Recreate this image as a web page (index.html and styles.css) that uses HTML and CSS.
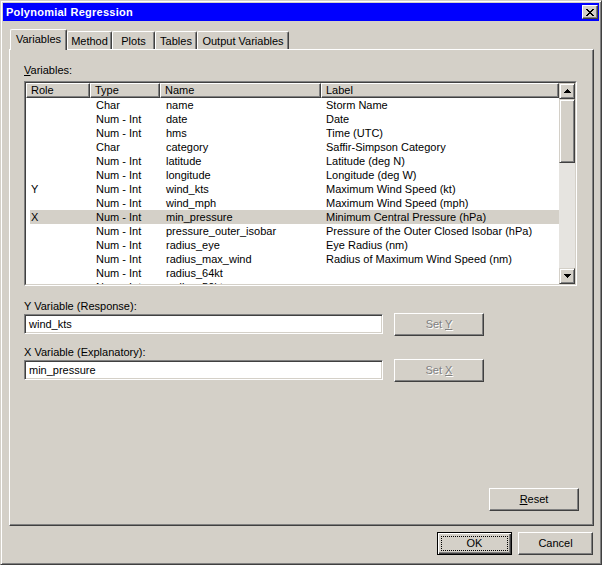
FILE: index.html
```html
<!DOCTYPE html>
<html>
<head>
<meta charset="utf-8">
<title>Polynomial Regression</title>
<link rel="stylesheet" href="styles.css">
</head>
<body>
<div class="window">
  <div class="titlebar">
    <span class="title">Polynomial Regression</span>
    <span class="close">
      <svg width="8" height="7" viewBox="0 0 8 7" shape-rendering="crispEdges"><path d="M0 0h2v1H0zM6 0h2v1H6zM1 1h2v1H1zM5 1h2v1H5zM2 2h4v1H2zM3 3h2v1H3zM2 4h4v1H2zM1 5h2v1H1zM5 5h2v1H5zM0 6h2v1H0zM6 6h2v1H6z" fill="#000"/></svg>
    </span>
  </div>

  <div class="tabs">
    <div class="tab tab-active tab-variables">Variables</div>
    <div class="tab tab-method">Method</div>
    <div class="tab tab-plots">Plots</div>
    <div class="tab tab-tables">Tables</div>
    <div class="tab tab-output">Output Variables</div>
  </div>

  <div class="panel">
    <div class="label"><u>V</u>ariables:</div>
    <div class="listbox">
      <div class="listinner">
        <div class="listmain">
          <div class="header">
            <div class="hcell hc-role">Role</div>
            <div class="hcell hc-type">Type</div>
            <div class="hcell hc-name">Name</div>
            <div class="hcell hc-label">Label</div>
          </div>
          <div class="rows">
            <div class="row"><span class="c-role"></span><span class="c-type">Char</span><span class="c-name">name</span><span class="c-label">Storm Name</span></div>
            <div class="row"><span class="c-role"></span><span class="c-type">Num - Int</span><span class="c-name">date</span><span class="c-label">Date</span></div>
            <div class="row"><span class="c-role"></span><span class="c-type">Num - Int</span><span class="c-name">hms</span><span class="c-label">Time (UTC)</span></div>
            <div class="row"><span class="c-role"></span><span class="c-type">Char</span><span class="c-name">category</span><span class="c-label">Saffir-Simpson Category</span></div>
            <div class="row"><span class="c-role"></span><span class="c-type">Num - Int</span><span class="c-name">latitude</span><span class="c-label">Latitude (deg N)</span></div>
            <div class="row"><span class="c-role"></span><span class="c-type">Num - Int</span><span class="c-name">longitude</span><span class="c-label">Longitude (deg W)</span></div>
            <div class="row"><span class="c-role">Y</span><span class="c-type">Num - Int</span><span class="c-name">wind_kts</span><span class="c-label">Maximum Wind Speed (kt)</span></div>
            <div class="row"><span class="c-role"></span><span class="c-type">Num - Int</span><span class="c-name">wind_mph</span><span class="c-label">Maximum Wind Speed (mph)</span></div>
            <div class="row row-selected"><span class="c-role">X</span><span class="c-type">Num - Int</span><span class="c-name">min_pressure</span><span class="c-label">Minimum Central Pressure (hPa)</span></div>
            <div class="row"><span class="c-role"></span><span class="c-type">Num - Int</span><span class="c-name">pressure_outer_isobar</span><span class="c-label">Pressure of the Outer Closed Isobar (hPa)</span></div>
            <div class="row"><span class="c-role"></span><span class="c-type">Num - Int</span><span class="c-name">radius_eye</span><span class="c-label">Eye Radius (nm)</span></div>
            <div class="row"><span class="c-role"></span><span class="c-type">Num - Int</span><span class="c-name">radius_max_wind</span><span class="c-label">Radius of Maximum Wind Speed (nm)</span></div>
            <div class="row"><span class="c-role"></span><span class="c-type">Num - Int</span><span class="c-name">radius_64kt</span><span class="c-label"></span></div>
            <div class="row"><span class="c-role"></span><span class="c-type">Num - Int</span><span class="c-name">radius_50kt</span><span class="c-label"></span></div>
          </div>
        </div>
        <div class="scrollbar">
          <div class="sb-btn">
            <svg width="7" height="4" viewBox="0 0 7 4" shape-rendering="crispEdges"><path d="M3 0h1v1H3zM2 1h3v1H2zM1 2h5v1H1zM0 3h7v1H0z" fill="#000"/></svg>
          </div>
          <div class="sb-thumb"></div>
          <div class="sb-track"></div>
          <div class="sb-btn">
            <svg width="7" height="4" viewBox="0 0 7 4" shape-rendering="crispEdges"><path d="M0 0h7v1H0zM1 1h5v1H1zM2 2h3v1H2zM3 3h1v1H3z" fill="#000"/></svg>
          </div>
        </div>
      </div>
    </div>

    <div class="label label-y">Y Variable (Response):</div>
    <div class="field-row">
      <div class="textbox">wind_kts</div>
      <div class="btn btn-disabled btn-set"><span>Set <u>Y</u></span></div>
    </div>

    <div class="label label-x">X Variable (Explanatory):</div>
    <div class="field-row">
      <div class="textbox">min_pressure</div>
      <div class="btn btn-disabled btn-set"><span>Set <u>X</u></span></div>
    </div>

    <div class="btn btn-reset"><span><u>R</u>eset</span></div>
  </div>

  <div class="dialog-buttons">
    <div class="btn btn-default">OK</div>
    <div class="btn">Cancel</div>
  </div>
</div>
</body>
</html>
```

FILE: styles.css
```css
html, body {
  margin: 0;
  padding: 0;
  background: #d4d0c8;
}

body {
  font-family: "Liberation Sans", Arial, sans-serif;
  font-size: 11px;
  color: #000;
}

.window {
  width: 602px;
  height: 565px;
  box-sizing: border-box;
  background: #d4d0c8;
  border: 1px solid;
  border-color: #d4d0c8 #404040 #404040 #d4d0c8;
  box-shadow: inset 1px 1px #fff, inset -1px -1px #808080;
  padding: 2px;
  display: flex;
  flex-direction: column;
}

.titlebar {
  height: 18px;
  flex: none;
  background: #0000ff;
  color: #fff;
  display: flex;
  align-items: center;
  justify-content: space-between;
  padding: 0 1px 0 3px;
}

.title {
  font-weight: bold;
  font-size: 11px;
  line-height: 13px;
  letter-spacing: 0.25px;
}

.close {
  width: 16px;
  height: 14px;
  box-sizing: border-box;
  background: #d4d0c8;
  border: 1px solid;
  border-color: #fff #404040 #404040 #fff;
  box-shadow: inset -1px -1px #808080;
  display: flex;
  align-items: center;
  justify-content: center;
  padding: 0 1px 0 0;
}

.tabs {
  flex: none;
  display: flex;
  align-items: flex-end;
  height: 20px;
  margin: 8px 0 0 7px;
  position: relative;
  z-index: 1;
}

.tab {
  box-sizing: border-box;
  height: 18px;
  border-top: 1px solid #fff;
  border-left: 1px solid #fff;
  border-right: 1px solid #404040;
  border-top-left-radius: 2px;
  border-top-right-radius: 2px;
  box-shadow: inset -1px 0 #808080;
  text-align: center;
  line-height: 13px;
  padding-top: 3px;
  white-space: nowrap;
  background: #d4d0c8;
}

.tab-active {
  height: 21px;
  margin-bottom: -1px;
}

.tab-variables { width: 57px; }
.tab-method { width: 45px; }
.tab-plots { width: 43px; }
.tab-tables { width: 42px; }
.tab-output { width: 92px; }

.panel {
  flex: none;
  box-sizing: border-box;
  height: 477px;
  width: 585px;
  margin-left: 6px;
  border-top: 1px solid #fff;
  border-left: 1px solid #fff;
  border-right: 1px solid #404040;
  border-bottom: 1px solid #404040;
  box-shadow: inset -1px -1px #808080;
  padding: 14px 16px 14px 14px;
  display: flex;
  flex-direction: column;
}

.label {
  line-height: 13px;
  height: 13px;
  white-space: nowrap;
}

.label-y {
  margin-top: 14px;
}

.label-x {
  margin-top: 10px;
}

.listbox {
  margin-top: 4px;
  height: 205px;
  box-sizing: border-box;
  border: 1px solid;
  border-color: #808080 #fff #fff #808080;
}

.listinner {
  height: 100%;
  box-sizing: border-box;
  border: 1px solid;
  border-color: #404040 #d4d0c8 #d4d0c8 #404040;
  background: #fff;
  display: flex;
}

.listmain {
  flex: 1;
  min-width: 0;
  overflow: hidden;
  display: flex;
  flex-direction: column;
}

.header {
  display: grid;
  grid-template-columns: 64px 70px 161px 1fr;
  height: 15px;
  flex: none;
}

.hcell {
  box-sizing: border-box;
  background: #d4d0c8;
  border: 1px solid;
  border-color: #fff #404040 #404040 #fff;
  box-shadow: inset -1px -1px #808080;
  line-height: 12px;
  padding-left: 4px;
  white-space: nowrap;
  overflow: hidden;
}

.rows {
  flex: 1;
  overflow: hidden;
}

.row {
  display: grid;
  grid-template-columns: 60px 70px 161px 1fr;
  height: 14px;
  line-height: 14px;
  margin-left: 4px;
  white-space: nowrap;
}

.row-selected {
  background: #d4d0c8;
}

.c-role { padding-left: 1px; }
.c-type { padding-left: 6px; }
.c-name { padding-left: 6px; }
.c-label { padding-left: 5px; }

.scrollbar {
  width: 16px;
  flex: none;
  display: flex;
  flex-direction: column;
  background: #e6e4e0;
}

.sb-btn,
.sb-thumb {
  box-sizing: border-box;
  background: #d4d0c8;
  border: 1px solid;
  border-color: #d4d0c8 #404040 #404040 #d4d0c8;
  box-shadow: inset 1px 1px #fff, inset -1px -1px #808080;
}

.sb-btn {
  height: 16px;
  flex: none;
  display: flex;
  align-items: center;
  justify-content: center;
}

.sb-thumb {
  height: 64px;
  flex: none;
}

.sb-track {
  flex: 1;
}

.field-row {
  display: flex;
  align-items: flex-start;
  height: 23px;
}

.textbox {
  margin-top: 1px;
  width: 359px;
  height: 20px;
  box-sizing: border-box;
  border: 1px solid;
  border-color: #808080 #fff #fff #808080;
  box-shadow: inset 1px 1px #404040, inset -1px -1px #d4d0c8;
  background: #fff;
  padding-left: 4px;
  line-height: 18px;
  white-space: nowrap;
}

.btn {
  box-sizing: border-box;
  height: 23px;
  width: 75px;
  background: #d4d0c8;
  border: 1px solid;
  border-color: #fff #404040 #404040 #fff;
  box-shadow: inset -1px -1px #808080;
  display: flex;
  align-items: center;
  justify-content: center;
  line-height: 13px;
  white-space: nowrap;
  position: relative;
}

.btn-set {
  width: 90px;
  margin-left: 11px;
}

.btn-disabled {
  color: #808080;
  text-shadow: 1px 1px #fff;
}

.btn-reset {
  width: 90px;
  margin-top: auto;
  align-self: flex-end;
  margin-right: -2px;
}

.dialog-buttons {
  flex: none;
  display: flex;
  justify-content: flex-end;
  gap: 6px;
  margin: 6px 6px 0 0;
}

.btn-default {
  border: 1px solid #000;
  box-shadow: inset 1px 1px #fff, inset -1px -1px #404040, inset -2px -2px #808080;
}

.btn-default::after {
  content: "";
  position: absolute;
  left: 3px;
  top: 3px;
  right: 3px;
  bottom: 3px;
  border: 1px dotted #000;
}
```
